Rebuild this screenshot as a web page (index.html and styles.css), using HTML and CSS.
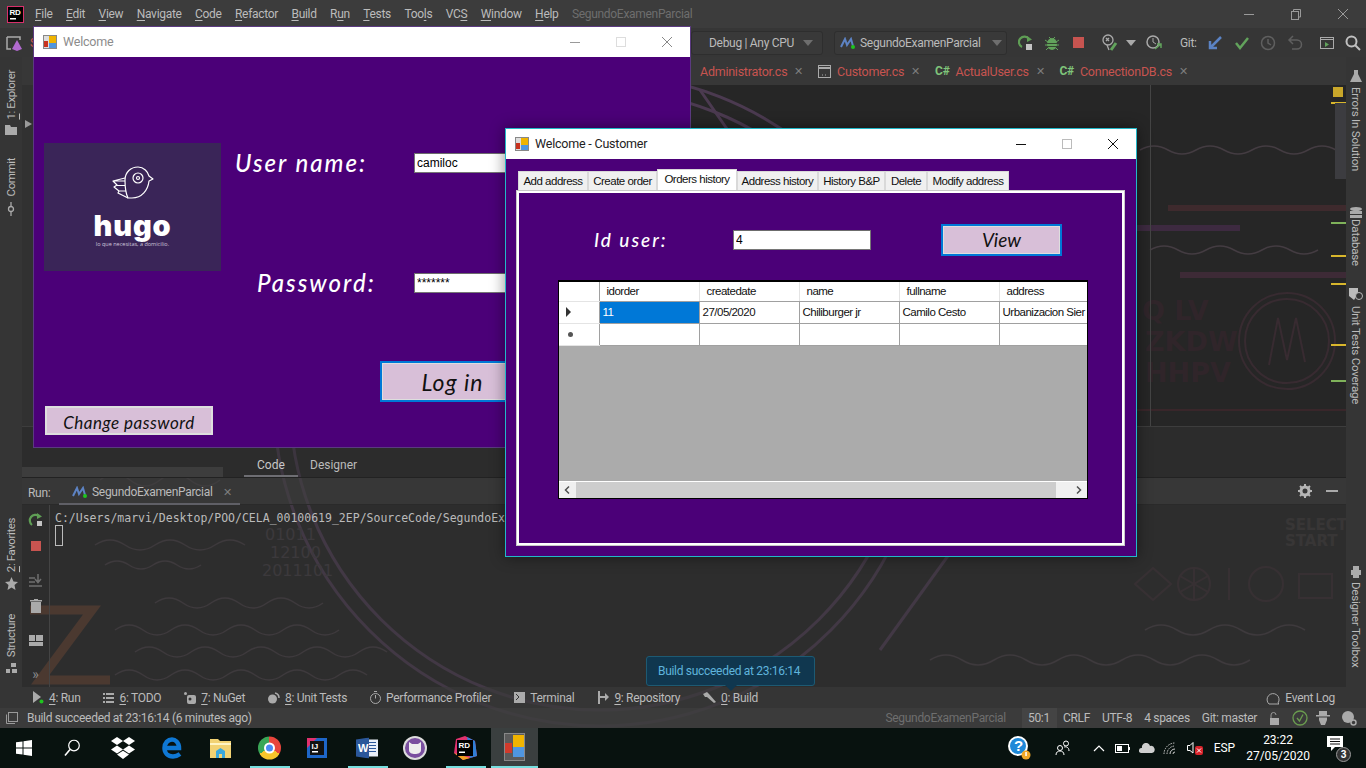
FILE: index.html
```html
<!DOCTYPE html>
<html lang="en">
<head>
  <meta charset="UTF-8">
  <title>SegundoExamenParcial</title>
  <link rel="stylesheet" href="styles.css">
</head>
<body>
  <div class="desktop">
    <!-- wallpaper behind the semi transparent IDE -->
    <svg class="wallpaper" width="1366" height="728" viewBox="0 0 1366 728" fill="none">
      <g stroke="#4b3a50" stroke-width="3">
        <circle cx="600" cy="400" r="310"/>
        <circle cx="600" cy="400" r="326"/>
        <path d="M700 90 L880 350 M880 650 L1010 470"/>
      </g>
      <path d="M30 610 H92 L40 680 H110" stroke="#5c3b2b" stroke-width="9"/>
      <g stroke="#443c42" stroke-width="1.5">
        <path d="M100 480 q15 -12 30 0 t30 0 t30 0 t30 0"/>
        <path d="M95 545 q15 -10 30 0 t30 0 t30 0 t30 0 t30 0"/>
        <path d="M105 565 q12 -8 24 0 t24 0 t24 0 t24 0"/>
        <path d="M155 603 q14 -10 28 0 t28 0 t28 0 t28 0 t28 0 t28 0"/>
        <path d="M115 630 q14 -10 28 0 t28 0 t28 0 t28 0 t28 0 t28 0 t28 0 t28 0"/>
        <path d="M135 652 q14 -10 28 0 t28 0 t28 0 t28 0 t28 0 t28 0 t28 0 t28 0 t28 0"/>
        <path d="M115 675 q14 -10 28 0 t28 0 t28 0 t28 0 t28 0 t28 0 t28 0 t28 0 t28 0"/>
        <path d="M930 660 q16 -10 32 0 t32 0 t32 0 t32 0 t32 0 t32 0 t32 0 t32 0 t32 0 t32 0"/>
        <path d="M1145 630 q16 -10 32 0 t32 0 t32 0 t32 0 t32 0"/>
        <path d="M1140 150 q14 -8 28 0 t28 0 t28 0 t28 0 t28 0 t28 0 t28 0"/>
        <path d="M1150 250 q14 -8 28 0 t28 0 t28 0 t28 0 t28 0 t28 0"/>
      </g>
      <g stroke-width="6">
        <path d="M1168 208 H1346" stroke="#3e2a2d"/>
        <path d="M1137 228 H1240" stroke="#3d2a40"/>
        <path d="M1180 275 H1346" stroke="#3d2a36"/>
      </g>
      <path d="M1137 410 H1346" stroke="#39262a" stroke-width="2"/>
      <g stroke="#382b31" stroke-width="2">
        <circle cx="1287" cy="341" r="48"/>
        <circle cx="1287" cy="341" r="42"/>
        <path d="M1269 365 L1278 318 L1287 360 L1296 318 L1305 362"/>
        <path d="M1153 568 L1171 584 L1153 600 L1135 584 Z"/>
        <circle cx="1194" cy="584" r="16"/>
        <path d="M1194 568 V600 M1180 576 L1208 592 M1180 592 L1208 576"/>
        <path d="M1229 568 V600"/>
        <circle cx="1266" cy="584" r="17"/>
        <rect x="1299" y="574" width="33" height="24"/>
      </g>
      <g class="wall-text">
        <text x="1142" y="320">Q LV</text>
        <text x="1145" y="351">ZKDW</text>
        <text x="1145" y="382">HHPV</text>
      </g>
      <g class="wall-small">
        <text x="1285" y="530">SELECT</text>
        <text x="1285" y="546">START</text>
      </g>
      <g class="wall-binary">
        <text x="265" y="540">01011</text>
        <text x="270" y="558">12100</text>
        <text x="262" y="576">2011101</text>
      </g>
    </svg>

    <div class="ide">
      <header class="menubar">
        <svg class="rd-logo" width="17" height="17" viewBox="0 0 17 17"><rect x=".5" y=".5" width="16" height="16" fill="#000" stroke="#d9306b"/><text x="2.5" y="9" class="logo-text">RD</text><rect x="3" y="12" width="6" height="1.5" fill="#fff"/></svg>
        <nav class="menu">
          <span><u>F</u>ile</span><span><u>E</u>dit</span><span><u>V</u>iew</span><span><u>N</u>avigate</span><span><u>C</u>ode</span><span><u>R</u>efactor</span><span><u>B</u>uild</span><span>R<u>u</u>n</span><span><u>T</u>ests</span><span>Too<u>l</u>s</span><span>VC<u>S</u></span><span><u>W</u>indow</span><span><u>H</u>elp</span>
          <span class="menu-project">SegundoExamenParcial</span>
        </nav>
        <div class="win-ctrl">
          <svg width="12" height="12" viewBox="0 0 12 12"><path d="M1 6.500H11" stroke="#9a9a9a"/></svg>
          <svg width="12" height="12" viewBox="0 0 12 12" fill="none" stroke="#9a9a9a"><rect x="1.500" y="3.500" width="7" height="8"/><path d="M3.500 3.500V1.500H10.500V9H8.500"/></svg>
          <svg width="12" height="12" viewBox="0 0 12 12"><path d="M1 1L11 11M11 1L1 11" stroke="#9a9a9a"/></svg>
        </div>
      </header>

      <div class="toolbar">
        <svg class="tb-first" width="18" height="18" viewBox="0 0 18 18"><path d="M1 3H14V6M1 3V15H5" fill="none" stroke="#aaa" stroke-width="1.500"/><path d="M11 6L16 15L11 17L6 15Z" fill="#b26ad0"/></svg>
        <span class="tb-s">S</span>
        <div class="tb-box tb-debug">
          <span>Debug | Any CPU</span><i class="caret"></i>
        </div>
        <div class="tb-box tb-config">
          <svg width="15" height="12" viewBox="0 0 15 12"><path d="M1 10L5 2L7 8L11 2L13 9" fill="none" stroke="#5d83c4" stroke-width="2"/><circle cx="13" cy="10" r="2" fill="#1fc41f"/></svg>
          <span>SegundoExamenParcial</span><i class="caret"></i>
        </div>
        <span class="tool"><svg width="16" height="16" viewBox="0 0 16 16" fill="none"><path d="M11 4A5.500 5.500 0 1 0 4 12" stroke="#5f9e55" stroke-width="2.200"/><path d="M9 1L14 4.500L9 7Z" fill="#5f9e55"/><rect x="8" y="9" width="6" height="6" fill="#c4c4c4"/></svg></span>
        <span class="tool"><svg width="16" height="16" viewBox="0 0 16 16"><ellipse cx="8" cy="9" rx="5" ry="6" fill="#62a35c"/><path d="M1 5L4 7M15 5L12 7M1 10H4M15 10H12M2 15L4 13M14 15L12 13M5 2L7 4M11 2L9 4" stroke="#62a35c"/><path d="M3 8.500H13M3 11.500H13" stroke="#35472f"/></svg></span>
        <span class="tool"><i class="stop"></i></span>
        <span class="tool tool-g1"><svg width="18" height="18" viewBox="0 0 18 18" fill="none" stroke="#aaa" stroke-width="1.300"><circle cx="7" cy="6" r="5"/><path d="M5 4L8 7M8 4L5 7M6 11L8 16"/><path d="M10 16L15 9" stroke="#62a35c" stroke-width="3"/></svg></span>
        <span class="tool-caret"><i class="caret caret-light"></i></span>
        <span class="tool tool-g2"><svg width="18" height="18" viewBox="0 0 18 18" fill="none"><circle cx="8" cy="8" r="6" stroke="#aaa" stroke-width="1.500"/><path d="M8 4V8L11 10" stroke="#aaa"/><path d="M10 15L16 10M12 10H16V14" stroke="#62a35c" stroke-width="1.500"/></svg></span>
        <span class="tb-git">Git:</span>
        <span class="tool tool-g3"><svg width="16" height="16" viewBox="0 0 16 16" fill="none"><path d="M14 2L4 12M3 6V13H10" stroke="#5b83c4" stroke-width="2.500"/></svg></span>
        <span class="tool tool-g4"><svg width="16" height="16" viewBox="0 0 16 16" fill="none"><path d="M2 8L6 13L14 3" stroke="#62a35c" stroke-width="2.500"/></svg></span>
        <span class="tool"><svg width="16" height="16" viewBox="0 0 16 16" fill="none" stroke="#5f5f5f" stroke-width="1.500"><circle cx="8" cy="8" r="6.500"/><path d="M8 4V8L11 10"/></svg></span>
        <span class="tool tool-g4"><svg width="16" height="16" viewBox="0 0 16 16" fill="none" stroke="#5f5f5f" stroke-width="1.500"><path d="M6 1L2 5L6 9M2 5H10A4 4 0 0 1 10 14H5"/></svg></span>
        <span class="tool tool-g5"><svg width="16" height="16" viewBox="0 0 16 16" fill="none"><rect x="1.500" y="2.500" width="13" height="11" stroke="#aaa"/><path d="M1.500 4.500H14.500" stroke="#aaa"/><path d="M6 7L10 9.500L6 12Z" fill="#62a35c"/></svg></span>
        <span class="tool"><svg width="16" height="16" viewBox="0 0 16 16" fill="none" stroke="#c0c0c0" stroke-width="2"><circle cx="6.500" cy="6.500" r="5"/><path d="M10 10L15 15"/></svg></span>
      </div>

      <div class="workspace">
        <aside class="side-left">
          <span class="vlabel vl-explorer"><u>1</u>: Explorer</span>
          <svg class="vl-folder" width="12" height="10" viewBox="0 0 12 10" fill="#aaa"><path d="M0 0H5L6 2H12V10H0Z"/></svg>
          <span class="vlabel vl-commit">Commit</span>
          <svg class="vl-commit-icon" width="14" height="10" viewBox="0 0 14 10" fill="none" stroke="#aaa" stroke-width="1.300"><circle cx="7" cy="5" r="2.500"/><path d="M0 5H4M10 5H14"/></svg>
          <span class="vlabel vl-fav"><u>2</u>: Favorites</span>
          <svg class="vl-star" width="13" height="13" viewBox="0 0 13 13"><path d="M6.500 0L8.500 4.500L13 5L9.500 8L10.500 13L6.500 10.500L2.500 13L3.500 8L0 5L4.500 4.500Z" fill="#aaa"/></svg>
          <span class="vlabel vl-struct">Structure</span>
          <svg class="vl-struct-icon" width="11" height="11" viewBox="0 0 11 11" fill="#aaa"><rect x="5" width="5" height="4"/><rect y="6" width="4" height="4"/><rect x="6" y="6" width="5" height="4"/></svg>
        </aside>

        <main class="center">
          <div class="file-tabs">
            <span class="file-tab ft-admin"><span class="red">Administrator.cs</span><em>&#x2715;</em></span>
            <span class="file-tab ft-cust"><svg width="13" height="13" viewBox="0 0 13 13" fill="none" stroke="#aaa"><rect x=".5" y=".5" width="12" height="12"/><path d="M.5 3H12.500" stroke-width="2"/><path d="M4 10H5M7 10H8"/></svg><span class="red">Customer.cs</span><em>&#x2715;</em></span>
            <span class="file-tab ft-actual"><b class="csharp">C#</b><span class="red">ActualUser.cs</span><em>&#x2715;</em></span>
            <span class="file-tab ft-conn"><b class="csharp">C#</b><span class="red">ConnectionDB.cs</span><em>&#x2715;</em></span>
          </div>
          <div class="editor">
            <i class="tree-strip"></i>
            <i class="tree-arrow"></i>
            <div class="editor-margin"></div>
            <div class="stripe">
              <i class="stripe-top"></i>
              <i class="mark mark-y m1"></i>
              <i class="stripe-thumb"></i>
              <i class="mark mark-g m2"></i>
              <i class="mark mark-y m3"></i>
              <i class="mark mark-y m4"></i>
              <i class="mark mark-y m5"></i>
              <i class="mark mark-g m6"></i>
            </div>
          </div>
          <div class="design-tabs">
            <span class="design-tab active">Code</span>
            <span class="design-tab">Designer</span>
          </div>
          <div class="run-head">
            <span class="run-label">Run:</span>
            <span class="run-tab">
              <svg width="15" height="12" viewBox="0 0 15 12"><path d="M1 10L5 2L7 8L11 2L13 9" fill="none" stroke="#5d83c4" stroke-width="2"/><circle cx="13" cy="10" r="2" fill="#1fc41f"/></svg>
              SegundoExamenParcial<em>&#x2715;</em>
            </span>
            <span class="run-actions">
              <svg width="14" height="14" viewBox="0 0 14 14"><circle cx="7" cy="7" r="4" fill="none" stroke="#b5b5b5" stroke-width="3"/><path d="M7 0V3M7 11V14M0 7H3M11 7H14M2 2L4 4M10 10L12 12M12 2L10 4M4 10L2 12" stroke="#b5b5b5" stroke-width="2"/></svg>
              <i class="min-dash"></i>
            </span>
          </div>
          <div class="run-body">
            <div class="run-tools">
              <svg width="16" height="16" viewBox="0 0 16 16" fill="none"><path d="M11 4A5.500 5.500 0 1 0 4 13" stroke="#5f9e55" stroke-width="2.200"/><path d="M9 1L14 4.500L9 7Z" fill="#5f9e55"/><rect x="9" y="9" width="5" height="5" fill="#c4c4c4"/></svg>
              <i class="stop stop-run"></i>
              <svg class="rt-scroll" width="14" height="14" viewBox="0 0 14 14" stroke="#6f6f6f" stroke-width="1.500" fill="none"><path d="M0 5H6M0 9H6M0 13H13M9 1V9M6 6L9 9.500L12 6"/></svg>
              <svg class="rt-trash" width="12" height="14" viewBox="0 0 12 14" fill="#aaa"><rect x="1" y="3" width="10" height="11"/><rect y="1" width="12" height="1.500"/><rect x="4" width="4" height="1.500"/></svg>
              <svg class="rt-layout" width="14" height="11" viewBox="0 0 14 11" fill="#aaa"><rect width="6" height="6"/><rect x="7" width="7" height="6"/><rect y="7" width="14" height="4"/></svg>
              <span class="rt-more">&raquo;</span>
            </div>
            <div class="console">C:/Users/marvi/Desktop/POO/CELA_00100619_2EP/SourceCode/SegundoEx<br><span class="cursor"></span></div>
            <div class="balloon">Build succeeded at 23:16:14</div>
          </div>
        </main>

        <aside class="side-right">
          <svg class="sr-flask" width="12" height="12" viewBox="0 0 12 12"><path d="M4 0H8V4L12 12H0L4 4Z" fill="#aaa"/></svg>
          <span class="vlabel-r sr-errors">Errors In Solution</span>
          <svg class="sr-db" width="12" height="12" viewBox="0 0 12 12" fill="#aaa"><ellipse cx="6" cy="2" rx="6" ry="2"/><rect y="4" width="12" height="3"/><rect y="8" width="12" height="3"/></svg>
          <span class="vlabel-r sr-database">Database</span>
          <svg class="sr-shield" width="14" height="12" viewBox="0 0 14 12"><path d="M0 0H9V6L5 12L0 8Z" fill="#bbb"/><circle cx="10" cy="8" r="3.500" fill="#333" stroke="#bbb"/></svg>
          <span class="vlabel-r sr-unit">Unit Tests Coverage</span>
          <svg class="sr-toolbox" width="10" height="12" viewBox="0 0 10 12" fill="#aaa"><rect x="2" width="6" height="4"/><rect y="4" width="10" height="5"/><rect x="2" y="9" width="6" height="3"/></svg>
          <span class="vlabel-r sr-toolbox-label">Designer Toolbox</span>
        </aside>
      </div>

      <div class="toolstrip">
        <span class="strip-item strip-run"><svg width="11" height="13" viewBox="0 0 11 13"><path d="M0 0L8 6L0 12Z" fill="#aaa"/><circle cx="8.500" cy="10.500" r="2" fill="#1fc41f"/></svg><span><u>4</u>: Run</span></span>
        <span class="strip-item"><svg width="11" height="11" viewBox="0 0 11 11" fill="#aaa"><path d="M0 1H2V3H0ZM3 1H11V3H3ZM0 5H2V7H0ZM3 5H11V7H3ZM0 9H2V11H0ZM3 9H11V11H3Z"/></svg><span><u>6</u>: TODO</span></span>
        <span class="strip-item"><svg width="12" height="12" viewBox="0 0 12 12" fill="#aaa"><rect x="3" y="3" width="9" height="9" rx="2"/><circle cx="1.500" cy="1.500" r="1.500"/><circle cx="6" cy="7" r="1.500" fill="#333"/></svg><span><u>7</u>: NuGet</span></span>
        <span class="strip-item"><svg width="12" height="12" viewBox="0 0 12 12"><circle cx="4.500" cy="7" r="4.500" fill="#aaa"/><path d="M7 1A5 5 0 0 1 11 6" stroke="#aaa" fill="none" stroke-width="1.500"/></svg><span><u>8</u>: Unit Tests</span></span>
        <span class="strip-item"><svg width="11" height="13" viewBox="0 0 11 13" fill="none" stroke="#aaa"><circle cx="5.500" cy="7.500" r="5"/><path d="M4 .5H7M5.500 7.500V4"/></svg><span>Performance Profiler</span></span>
        <span class="strip-item"><svg width="11" height="11" viewBox="0 0 11 11"><rect width="11" height="11" fill="#aaa"/><path d="M2 2L5 5L2 8" stroke="#333" fill="none"/></svg><span>Terminal</span></span>
        <span class="strip-item"><svg width="12" height="13" viewBox="0 0 12 13" fill="#aaa"><rect x="1" width="2" height="13"/><path d="M3 5H8V2L12 6L8 10V7H3Z"/></svg><span><u>9</u>: Repository</span></span>
        <span class="strip-item"><svg width="13" height="11" viewBox="0 0 13 11"><path d="M0 2L4 0L6 2L13 10L11 11L4 5L2 5Z" fill="#aaa"/></svg><span><u>0</u>: Build</span></span>
        <span class="strip-item strip-log"><svg width="14" height="14" viewBox="0 0 14 14" fill="none" stroke="#aaa"><path d="M3 13A6 6 0 1 1 12 12L13 13Z"/></svg><span>Event Log</span></span>
      </div>

      <footer class="statusbar">
        <svg width="12" height="12" viewBox="0 0 12 12" fill="none" stroke="#9a9a9a"><rect x="2.500" y=".5" width="9" height="9"/><path d="M.5 2.500V11.500H9"/></svg>
        <span class="status-msg">Build succeeded at 23:16:14 (6 minutes ago)</span>
        <span class="status-right">
          <span class="dim">SegundoExamenParcial</span>
          <span class="pos">50:1</span>
          <span>CRLF</span><span>UTF-8</span><span>4 spaces</span><span>Git: master</span>
          <svg width="11" height="13" viewBox="0 0 11 13"><path d="M2 6V3A2.500 2.500 0 0 1 7 3" fill="none" stroke="#999"/><rect x="1" y="6" width="9" height="7" fill="#aaa"/></svg>
          <svg width="16" height="16" viewBox="0 0 16 16" fill="none" stroke="#6a9c4f" stroke-width="1.300"><circle cx="8" cy="8" r="7"/><path d="M5 8L7.500 11L11 4.500"/></svg>
          <svg class="st-hat" width="14" height="14" viewBox="0 0 14 14" fill="#aaa"><rect x="3" width="8" height="4"/><rect y="4" width="14" height="1.500"/><path d="M3 6.500H11V9L9 14H5L3 9Z"/></svg>
          <svg width="15" height="15" viewBox="0 0 15 15" fill="#aaa"><circle cx="6" cy="6" r="6"/><circle cx="11.500" cy="11.500" r="2.500" fill="none" stroke="#aaa" stroke-width="1.500"/></svg>
        </span>
      </footer>
    </div>

    <footer class="taskbar">
      <svg class="tk-win" width="16" height="16" viewBox="0 0 16 16" fill="#fff"><path d="M0 2.300L6.500 1.400V7.500H0ZM7.500 1.200L16 0V7.500H7.500ZM0 8.500H6.500V14.600L0 13.700ZM7.500 8.500H16V16L7.500 14.800Z"/></svg>
      <svg class="tk-search" width="16" height="17" viewBox="0 0 16 17" fill="none" stroke="#fff" stroke-width="1.200"><circle cx="10" cy="6" r="5.300"/><path d="M6 10L1 16" stroke-width="1.600"/></svg>
      <svg class="tk-drop" width="24" height="22" viewBox="0 0 24 22" fill="#fff"><path d="M6 0L12 4L6 8L0 4ZM18 0L24 4L18 8L12 4ZM6 8.500L12 12.500L6 16.500L0 12.500ZM18 8.500L24 12.500L18 16.500L12 12.500ZM6 17.500L12 13.800L18 17.500L12 22Z"/></svg>
      <svg class="tk-edge" width="20" height="22" viewBox="0 0 20 22" fill="none" stroke="#0f78d4" stroke-width="4.500"><path d="M3 11H17C17 5 13 2.500 10 2.500C6 2.500 2.500 6 2.500 11C2.500 16 6 19.500 11 19.500C14 19.500 16 18.500 18 17"/></svg>
      <svg class="tk-files" width="21" height="20" viewBox="0 0 21 20"><path d="M0 1H8L10 3H21V20H0Z" fill="#f2d273"/><path d="M0 5H21V7H0Z" fill="#fff4c4"/><path d="M6 20V13L10.500 10L15 13V20H12V16H9V20Z" fill="#3ba8dc"/></svg>
      <span class="tk-chrome"><i></i></span>
      <svg class="tk-ij" width="20" height="20" viewBox="0 0 20 20"><rect width="20" height="20" fill="#1e66c8"/><path d="M0 0H10L0 10Z" fill="#e0316e"/><rect x="3" y="3" width="14" height="14" fill="#111"/><text x="4.500" y="10.500" class="ij-text">IJ</text><rect x="5" y="13" width="6" height="1.500" fill="#fff"/></svg>
      <svg class="tk-word" width="22" height="21" viewBox="0 0 22 21"><rect x="8" y="2" width="14" height="17" fill="#e8eef8"/><path d="M11 5H20M11 8H20M11 11H20M11 14H20" stroke="#2b579a"/><path d="M0 2L13 0V21L0 19Z" fill="#2b579a"/><text x="2" y="14.500" class="word-text">W</text></svg>
      <svg class="tk-kraken" width="24" height="24" viewBox="0 0 24 24"><circle cx="12" cy="12" r="12" fill="#ddd"/><circle cx="12" cy="12" r="10" fill="#7a4fa0"/><path d="M6 6L9 8H15L18 6V14C18 17 15 18 12 18C9 18 6 17 6 14Z" fill="#eee"/></svg>
      <svg class="tk-rd" width="24" height="24" viewBox="0 0 24 24"><path d="M3 3L12 0L22 5L24 20L10 24L1 17Z" fill="#e0316e"/><path d="M14 1L22 5L24 20L17 22Z" fill="#2f7fd6"/><path d="M1 17L10 24L17 22Z" fill="#f0a020"/><rect x="4" y="4" width="16" height="16" fill="#000"/><text x="5.500" y="12" class="rd-text">RD</text><rect x="6" y="15.500" width="6" height="1.500" fill="#fff"/></svg>
      <span class="tk-active"><svg width="21" height="28" viewBox="0 0 21 28"><rect x=".5" y=".5" width="20" height="27" fill="#5b5b5b" stroke="#888"/><rect x="9" y="2" width="11" height="12" fill="#f0b400"/><rect x="1" y="10" width="7" height="10" fill="#d13a2b"/><rect x="9" y="14" width="11" height="10" fill="#4f96e0"/></svg></span>

      <span class="tray">
        <svg width="24" height="26" viewBox="0 0 24 26"><circle cx="11" cy="11" r="10" fill="#fff"/><circle cx="11" cy="11" r="8" fill="#1e88d8"/><text x="7" y="16" class="help-text">?</text><circle cx="19" cy="20" r="4.500" fill="#f0a828"/><rect x="18.300" y="17" width="1.500" height="4" fill="#fff"/></svg>
        <svg class="tr-people" width="16" height="16" viewBox="0 0 16 16" fill="none" stroke="#fff"><circle cx="5" cy="8" r="2.500"/><path d="M1 15C1 12 3 11 5 11C7 11 9 12 9 15"/><circle cx="11" cy="3.500" r="2.500"/><path d="M9 7C11 6.500 14 7 14 11"/></svg>
        <svg class="tr-up" width="12" height="7" viewBox="0 0 12 7" fill="none" stroke="#fff" stroke-width="1.200"><path d="M1 6L6 1L11 6"/></svg>
        <svg class="tr-batt" width="15" height="9" viewBox="0 0 15 9"><rect x=".5" y=".5" width="13" height="8" fill="none" stroke="#fff"/><rect x="2" y="2" width="5" height="5" fill="#fff"/><rect x="14" y="3" width="1" height="3" fill="#fff"/></svg>
        <svg class="tr-cloud" width="16" height="10" viewBox="0 0 16 10"><path d="M2 10A2.500 2.500 0 0 1 3 5A4 4 0 0 1 11 3A3.500 3.500 0 0 1 13 10Z" fill="#cfcfcf"/></svg>
        <svg class="tr-wifi" width="13" height="13" viewBox="0 0 13 13" fill="none" stroke="#cfcfcf"><path d="M1 12A11 11 0 0 1 12 1M4 12A8 8 0 0 1 12 4" stroke-dasharray="1.500 1"/><path d="M7 12A5 5 0 0 1 12 7M10 12A2 2 0 0 1 12 10" /></svg>
        <svg class="tr-vol" width="16" height="14" viewBox="0 0 16 14"><path d="M.5 4.500H3L6 1.500V12L3 9.500H.5Z" fill="none" stroke="#fff"/><rect x="8" y="5" width="8" height="9" rx="2" fill="#d8232a"/><path d="M10 7.500L14 11.500M14 7.500L10 11.500" stroke="#fff"/></svg>
        <span class="tr-lang">ESP</span>
        <span class="tr-clock"><span>23:22</span><span>27/05/2020</span></span>
        <span class="tr-notif">
          <svg width="16" height="15" viewBox="0 0 16 15"><path d="M0 0H16V11H8L4 15V11H0Z" fill="#fff"/><path d="M3 3H13M3 5.500H13M3 8H13" stroke="#111"/></svg>
          <b>3</b>
        </span>
      </span>
    </footer>

    <!-- login form window, sits under the customer window -->
    <section class="window win-login">
      <div class="titlebar title-dim">
        <svg class="app-icon" width="14" height="14" viewBox="0 0 14 14"><rect x=".5" y=".5" width="13" height="13" fill="#ddd" stroke="#888"/><rect x="6" y="1" width="7" height="7" fill="#f0b400"/><rect x="1" y="6" width="4" height="6" fill="#c8321e"/><rect x="6" y="8" width="7" height="5" fill="#4f96e0"/></svg>
        <span class="title-text">Welcome</span>
        <span class="title-btns">
          <svg width="12" height="12" viewBox="0 0 12 12"><path d="M1 6.500H11" stroke="#999"/></svg>
          <svg width="12" height="12" viewBox="0 0 12 12"><rect x="1.500" y="1.500" width="9" height="9" fill="none" stroke="#ddd"/></svg>
          <svg width="12" height="12" viewBox="0 0 12 12"><path d="M1 1L11 11M11 1L1 11" stroke="#888"/></svg>
        </span>
      </div>
      <div class="login-body">
        <div class="login-left">
          <div class="logo-box">
            <svg width="42" height="34" viewBox="0 0 42 34" fill="none" stroke="#fff" stroke-width="1.200" stroke-linejoin="round">
              <path d="M13 14C13 6 19 1 26 1C32 1 36 6 37 10L41 13L37 15C36 24 30 32 20 32H16C14 28 13 20 13 14Z"/>
              <circle cx="26" cy="12" r="5"/><circle cx="26" cy="12" r="1.500"/>
              <path d="M13 12L1 15L5 19L2 21L7 25L6 27L16 32M1 15H13M5 19.500H13M7 25H14"/>
            </svg>
            <span class="hugo">hugo</span>
            <span class="hugo-tag">lo que necesitas, a domicilio.</span>
          </div>
          <button class="btn-plain" type="button">Change password</button>
        </div>
        <form class="login-form">
          <div class="login-row">
            <label class="hand-label">User name:</label>
            <input class="win-input" type="text" value="camiloc">
          </div>
          <div class="login-row row-pass">
            <label class="hand-label label-pass">Password:</label>
            <input class="win-input input-pass" type="text" value="*******">
          </div>
          <button class="btn-login" type="button">Log in</button>
        </form>
      </div>
    </section>

    <!-- customer window, orders history tab -->
    <section class="window win-customer">
      <div class="titlebar">
        <svg class="app-icon" width="14" height="14" viewBox="0 0 14 14"><rect x=".5" y=".5" width="13" height="13" fill="#ddd" stroke="#888"/><rect x="6" y="1" width="7" height="7" fill="#f0b400"/><rect x="1" y="6" width="4" height="6" fill="#c8321e"/><rect x="6" y="8" width="7" height="5" fill="#4f96e0"/></svg>
        <span class="title-text">Welcome - Customer</span>
        <span class="title-btns">
          <svg width="12" height="12" viewBox="0 0 12 12"><path d="M1 6.500H11" stroke="#111"/></svg>
          <svg width="12" height="12" viewBox="0 0 12 12"><rect x="1.500" y="1.500" width="9" height="9" fill="none" stroke="#bbb"/></svg>
          <svg width="12" height="12" viewBox="0 0 12 12"><path d="M1 1L11 11M11 1L1 11" stroke="#111"/></svg>
        </span>
      </div>
      <div class="customer-body">
        <div class="tabs">
          <span class="tab tab-add">Add address</span>
          <span class="tab tab-create">Create order</span>
          <span class="tab tab-orders active">Orders history</span>
          <span class="tab tab-addr">Address history</span>
          <span class="tab tab-hist">History B&amp;P</span>
          <span class="tab tab-del">Delete</span>
          <span class="tab tab-mod">Modify address</span>
        </div>
        <div class="tab-page">
          <div class="search-row">
            <label class="hand-label label-id">Id user:</label>
            <input class="win-input input-id" type="text" value="4">
            <button class="btn-view" type="button">View</button>
          </div>
          <div class="datagrid">
            <table>
              <thead>
                <tr><th class="row-head"></th><th>idorder</th><th>createdate</th><th>name</th><th>fullname</th><th>address</th></tr>
              </thead>
              <tbody>
                <tr><td class="row-head"><i class="row-arrow"></i></td><td class="selected">11</td><td>27/05/2020</td><td>Chiliburger jr</td><td>Camilo Cesto</td><td>Urbanizacion Sier</td></tr>
                <tr><td class="row-head"><i class="row-star"></i></td><td></td><td></td><td></td><td></td><td></td></tr>
              </tbody>
            </table>
            <div class="grid-empty"></div>
            <div class="hscroll">
              <svg width="17" height="16" viewBox="0 0 17 16" fill="none" stroke="#505050" stroke-width="1.500"><path d="M10 4.500L6.500 8L10 11.500"/></svg>
              <i class="hscroll-thumb"></i>
              <svg class="hscroll-right" width="17" height="16" viewBox="0 0 17 16" fill="none" stroke="#505050" stroke-width="1.500"><path d="M7 4.500L10.500 8L7 11.500"/></svg>
            </div>
          </div>
        </div>
      </div>
    </section>
  </div>
</body>
</html>
```

FILE: styles.css
```css
* { box-sizing: border-box; }
html, body { margin: 0; padding: 0; }
body { font-family: Roboto, "Noto Sans", sans-serif; }

.desktop {
  position: relative;
  width: 1366px;
  height: 768px;
  overflow: hidden;
  background: #262626;
}
.wallpaper { position: absolute; top: 0; left: 0; }
.wall-text text { font: bold 27px "DejaVu Sans", sans-serif; fill: #30252a; }
.wall-small text { font: bold 15px "DejaVu Sans", sans-serif; fill: #3a3636; }
.wall-binary text { font: 16px "DejaVu Sans", sans-serif; fill: #403b40; }

/*---------------------------------- IDE ----------------------------------*/
.ide {
  position: relative;
  height: 728px;
  display: flex;
  flex-direction: column;
  color: #bbbbbb;
  font-size: 12px;
  letter-spacing: -0.3px;
}
.logo-text { font: bold 8px "Liberation Sans", sans-serif; fill: #fff; }
u { text-underline-offset: 2px; }

.menubar {
  height: 28px;
  background: #3c3c3c;
  display: flex;
  align-items: center;
  padding-left: 7px;
}
.rd-logo { margin-right: 11px; }
.menu { display: flex; gap: 13.400px; }
.menu-project { color: #6e6e6e; }
.win-ctrl { margin-left: auto; display: flex; gap: 35px; padding-right: 17px; }

.toolbar {
  height: 29px;
  background: rgba(58, 58, 58, 0.85);
  display: flex;
  align-items: center;
  padding-left: 6px;
}
.tb-s { color: #c75450; margin-left: 6px; }
.tb-box {
  height: 24px;
  border: 1px solid #2e2e2e;
  border-radius: 3px;
  display: flex;
  align-items: center;
  gap: 5px;
  background: rgba(60, 60, 60, 0.6);
  white-space: nowrap;
}
.tb-box svg { flex: none; }
.tb-debug { width: 132px; margin-left: auto; padding-left: 17px; gap: 3px; }
.tb-config { width: 173px; margin: 0 6px 0 11px; padding-left: 5px; }
.caret {
  width: 0;
  height: 0;
  border: 5px solid transparent;
  border-top: 6px solid #6e6e6e;
  border-bottom: 0;
  margin-left: 6px;
  display: block;
}
.caret-light { border-top-color: #aaa; margin: 0; }
.tool { width: 26px; display: flex; justify-content: center; }
.tool-caret { width: 16px; display: flex; justify-content: center; }
.tool-g1 { margin-left: 6px; }
.tool-g2 { margin-left: 2px; }
.tb-git { margin-left: 13px; width: 18px; }
.tool-g3 { margin-left: 4px; }
.tool-g4 { margin-left: 1px; }
.tool-g5 { margin-left: 6px; }
.stop { display: block; width: 11px; height: 11px; background: #c75450; }

.workspace { flex: 1; display: flex; min-height: 0; }

.side-left {
  width: 22px;
  background: #353535;
  position: relative;
  display: flex;
  flex-direction: column;
  align-items: center;
}
.vlabel, .vlabel-r { writing-mode: vertical-rl; font-size: 11.500px; white-space: nowrap; }
.vlabel { transform: rotate(180deg); letter-spacing: -0.4px; }
.vlabel-r { letter-spacing: -0.2px; }
.vl-explorer { margin-top: 13px; }
.vl-folder { margin-top: 5px; }
.vl-commit { margin-top: 23px; }
.vl-commit-icon { margin-top: 8px; transform: rotate(90deg); }
.vl-fav { margin-top: 304px; }
.vl-star { margin-top: 5px; }
.vl-struct { margin-top: 24px; }
.vl-struct-icon { margin-top: 6px; }

.center { flex: 1; min-width: 0; display: flex; flex-direction: column; }
.file-tabs {
  height: 28px;
  background: rgba(62, 62, 62, 0.7);
  display: flex;
  align-items: center;
  padding-left: 678px;
  font-size: 12.500px;
  letter-spacing: -0.250px;
}
.file-tab { display: flex; align-items: center; gap: 6px; }
.file-tab em { font-style: normal; color: #7d7d7d; font-size: 11px; margin-left: 1px; }
.ft-cust, .ft-actual, .ft-conn { margin-left: 15px; }
.red { color: #c75450; }
.csharp { color: #7fc47a; font-weight: bold; font-size: 12px; }

.editor { position: relative; border-bottom: 1px solid #3d3d3d; height: 342px; flex: none; }
.tree-strip { position: absolute; left: 0; top: 0; bottom: 0; width: 12px; background: rgba(60, 60, 60, 0.5); }
.tree-arrow {
  position: absolute;
  left: 3px;
  top: 35px;
  border: 4px solid transparent;
  border-left: 7px solid #9a9a9a;
  border-right: 0;
}
.editor-margin { position: absolute; top: 0; bottom: 0; left: 1128px; width: 1px; background: #444; }
.stripe { position: absolute; top: 0; bottom: 0; left: 1309px; width: 15px; }
.stripe i { position: absolute; display: block; }
.stripe-top { top: 2px; left: 2px; width: 10px; height: 10px; background: #c9a72a; }
.stripe-thumb { top: 18px; left: 4px; width: 11px; height: 76px; background: #3c3c40; }
.mark { left: 0; width: 15px; height: 2px; }
.mark-y { background: #d8b62c; }
.mark-g { background: #7fb25a; }
.m1 { top: 17px; }
.m2 { top: 137px; }
.m3 { top: 170px; }
.m4 { top: 198px; }
.m5 { top: 259px; }
.m6 { top: 295px; }

.design-tabs {
  position: relative;
  height: 51px;
  background: rgba(50, 50, 50, 0.55);
  display: flex;
  align-items: flex-end;
  padding-left: 222px;
  border-bottom: 1px solid #222;
}
.design-tabs::before {
  content: '';
  position: absolute;
  left: 0;
  bottom: 0;
  width: 201px;
  height: 10px;
  background: #3d3d3d;
}
.design-tab { height: 31px; padding: 12px 12px 0; border-bottom: 2px solid transparent; letter-spacing: 0; }
.design-tab.active { width: 54px; padding-left: 13px; border-bottom-color: #6e6e73; color: #c8c8c8; }

.run-head {
  height: 27px;
  background: rgba(62, 62, 62, 0.75);
  display: flex;
  align-items: center;
  padding-left: 6px;
  border-bottom: 1px solid #2a2a2a;
}
.run-label { width: 31px; padding-top: 3px; }
.run-tab {
  width: 181px;
  height: 27px;
  border-bottom: 2px solid #5f5f66;
  display: flex;
  align-items: center;
  gap: 5px;
  padding: 4px 0 0 13px;
  white-space: nowrap;
}
.run-tab em { font-style: normal; color: #7d7d7d; font-size: 11px; margin-left: 5px; }
.run-actions { margin-left: auto; display: flex; align-items: center; gap: 14px; padding-right: 8px; }
.min-dash { display: block; width: 12px; height: 2px; background: #aaa; }

.run-body {
  flex: 1;
  position: relative;
  background: rgba(56, 56, 56, 0.45);
  display: flex;
}
.run-tools {
  width: 28px;
  border-right: 1px solid #444;
  display: flex;
  flex-direction: column;
  align-items: center;
  padding-top: 7px;
}
.stop-run { width: 10px; height: 10px; margin-top: 13px; }
.rt-scroll { margin-top: 22px; }
.rt-trash { margin-top: 12px; }
.rt-layout { margin-top: 22px; }
.rt-more { margin-top: 21px; color: #888; font-size: 14px; line-height: 1; }
.console {
  padding: 6px 0 0 5px;
  font: 11.500px/15px "DejaVu Sans Mono", monospace;
  letter-spacing: 0;
  color: #bbb;
  white-space: nowrap;
}
.cursor { display: block; width: 8px; height: 21px; border: 1px solid #bbb; margin-top: -1px; }
.balloon {
  position: absolute;
  left: 624px;
  top: 151px;
  width: 169px;
  height: 30px;
  background: #10374f;
  border: 1px solid #1d5a73;
  border-radius: 3px;
  color: #5fb4dc;
  line-height: 28px;
  padding-left: 11px;
  white-space: nowrap;
}
.balloon::after {
  content: '';
  position: absolute;
  left: 78px;
  bottom: -6px;
  border: 6px solid transparent;
  border-top-color: #10374f;
  border-bottom: 0;
}

.side-right {
  width: 20px;
  background: #353535;
  display: flex;
  flex-direction: column;
  align-items: center;
}
.sr-flask { margin-top: 13px; }
.sr-errors { margin-top: 5px; }
.sr-db { margin-top: 36px; }
.sr-database { margin-top: 0; }
.sr-shield { margin-top: 22px; }
.sr-unit { margin-top: 6px; }
.sr-toolbox { margin-top: 162px; }
.sr-toolbox-label { margin-top: 4px; }

.toolstrip {
  height: 21px;
  background: rgba(58, 58, 58, 0.8);
  display: flex;
  align-items: center;
  padding-left: 33px;
  gap: 23px;
}
.strip-item { display: flex; align-items: center; gap: 5px; position: relative; }
.strip-run::before {
  content: '';
  position: absolute;
  left: -11px;
  right: -9px;
  top: -4px;
  bottom: -3px;
  background: rgba(40, 40, 40, 0.55);
  z-index: -1;
}
.strip-log { margin-left: auto; margin-right: 31px; }

.statusbar {
  height: 20px;
  background: rgba(62, 62, 62, 0.9);
  display: flex;
  align-items: center;
  padding-left: 6px;
}
.status-msg { margin-left: 9px; }
.status-right { margin-left: auto; display: flex; align-items: center; gap: 12px; padding-right: 9px; }
.dim { color: #6e6e6e; margin-right: 4px; }
.pos { background: #444; padding: 0 7px 0 6px; height: 20px; line-height: 20px; margin-right: -6px; }
.st-hat { margin-left: -4px; }

/*---------------------------------- TASKBAR ----------------------------------*/
.taskbar {
  position: relative;
  height: 40px;
  background: #08120f;
  display: flex;
  align-items: center;
  color: #fff;
}
.taskbar > svg, .tk-chrome { position: absolute; top: 50%; transform: translateY(-50%); }
.tk-win { left: 16px; }
.tk-search { left: 64px; }
.tk-drop { left: 111px; }
.tk-edge { left: 162px; }
.tk-files { left: 210px; }
.tk-chrome {
  left: 258px;
  width: 23px;
  height: 23px;
  border-radius: 50%;
  background: conic-gradient(#e8453c 0 120deg, #f7c52b 120deg 240deg, #3aa757 240deg);
  display: flex;
  align-items: center;
  justify-content: center;
}
.tk-chrome i { display: block; width: 11px; height: 11px; border-radius: 50%; background: #4a8af4; border: 2px solid #fff; }
.tk-ij { left: 307px; }
.tk-word { left: 356px; }
.tk-kraken { left: 403px; }
.tk-rd { left: 453px; }
.ij-text, .rd-text { font: bold 8px "Liberation Sans", sans-serif; fill: #fff; }
.word-text { font: bold 11px "Liberation Sans", sans-serif; fill: #fff; }
.help-text { font: bold 15px "Liberation Sans", sans-serif; fill: #fff; }
.tk-active {
  position: absolute;
  left: 491px;
  top: 0;
  width: 47px;
  height: 40px;
  background: #3a3f3f;
  display: flex;
  align-items: center;
  justify-content: center;
  border-bottom: 2px solid #76dede;
}
.taskbar::after {
  content: '';
  position: absolute;
  left: 250px;
  bottom: 0;
  width: 40px;
  height: 2px;
  background: #76dede;
  box-shadow: 98px 0 0 #76dede, 196px 0 0 #76dede;
}
.tray { margin-left: auto; display: flex; align-items: center; padding-right: 19px; font-size: 12px; }
.tr-people { margin-left: 24px; }
.tr-up { margin-left: 22px; }
.tr-batt { margin-left: 10px; }
.tr-cloud { margin-left: 9px; }
.tr-wifi { margin-left: 8px; }
.tr-vol { margin-left: 11px; }
.tr-lang { margin-left: 11px; }
.tr-clock { margin-left: 11px; display: flex; flex-direction: column; align-items: center; gap: 4px; line-height: 12px; }
.tr-notif { position: relative; margin-left: 17px; display: block; width: 20px; height: 24px; }
.tr-notif b {
  position: absolute;
  right: -4px;
  bottom: -2px;
  width: 15px;
  height: 15px;
  border-radius: 50%;
  background: #333;
  border: 1px solid #999;
  font-size: 10px;
  line-height: 13px;
  text-align: center;
}

/*---------------------------------- WINFORMS WINDOWS ----------------------------------*/
.window { position: absolute; display: flex; flex-direction: column; background: #4b0078; }
.win-login { left: 34px; top: 27px; width: 656px; height: 420px; box-shadow: 0 0 0 1px #5b3a80; }
.win-customer {
  left: 505px;
  top: 128px;
  width: 632px;
  height: 429px;
  border: 1px solid #22b8c8;
  box-shadow: 0 0 14px rgba(0, 0, 0, 0.45);
}
.titlebar {
  height: 30px;
  background: #fff;
  display: flex;
  align-items: center;
  padding-left: 9px;
  color: #222;
  font-size: 12.500px;
  letter-spacing: -0.2px;
  flex: none;
}
.title-text { margin: 0 0 2px 6px; }
.title-dim .title-text { color: #8c8c8c; }
.title-btns { margin-left: auto; display: flex; gap: 34px; padding-right: 17px; }

.hand-label {
  font: italic 500 24px/20px Lato, "Open Sans", sans-serif;
  letter-spacing: 2px;
  color: #fff;
  white-space: nowrap;
  margin-top: -1px;
}
.win-input {
  height: 20px;
  border: 1px solid #767676;
  border-top-color: #6c6c6c;
  background: #fff;
  padding: 0 2px;
  font: 12px "Liberation Sans", sans-serif;
  color: #000;
  outline: 0;
  border-radius: 0;
}

.login-body { flex: 1; display: flex; min-height: 0; }
.login-left { width: 201px; padding: 86px 0 0 10px; flex: none; }
.logo-box {
  width: 177px;
  height: 128px;
  background: #3a2558;
  display: flex;
  flex-direction: column;
  align-items: center;
  padding-top: 23px;
  color: #fff;
}
.hugo { font: 900 29px/26px Inter, Lato, sans-serif; margin-top: 13px; letter-spacing: 0.800px; }
.hugo-tag { font: 5.500px/8px "Open Sans", sans-serif; color: #cfc6dc; margin-top: 1px; }
.btn-plain {
  display: block;
  width: 168px;
  height: 29px;
  margin: 135px 0 0 1px;
  background: #d8bfd8;
  border: 2px solid #dedede;
  font: italic 17px/24px Lato, sans-serif;
  letter-spacing: 0.500px;
  color: #111;
  padding: 3px 0 0;
}
.login-form { padding-top: 96px; flex: none; width: 340px; }
.login-row { display: grid; grid-template-columns: 179px 130px; align-items: center; }
.row-pass { margin-top: 100px; }
.label-pass { margin-left: 22px; }
.btn-login {
  display: block;
  width: 150px;
  height: 41px;
  margin: 68px 0 0 145px;
  background: #d8bfd8;
  border: 2px solid #0078d7;
  box-shadow: inset 0 0 0 1px #dedede;
  font: italic 23px/30px Lato, sans-serif;
  letter-spacing: 1px;
  color: #111;
  padding: 0 5px 0 0;
}

.customer-body { flex: 1; padding: 10px 11px 10px 10px; display: flex; flex-direction: column; min-height: 0; }
.tabs { height: 21px; display: flex; align-items: flex-end; padding-left: 2px; flex: none; }
.tab {
  height: 19px;
  background: #f0f0f0;
  border: 1px solid #d9d9d9;
  border-bottom: 0;
  font: 11.500px/19px "Liberation Sans", sans-serif;
  letter-spacing: -0.500px;
  color: #111;
  text-align: center;
  white-space: nowrap;
}
.tab.active { height: 21px; background: #fff; line-height: 18px; }
.tab-add { width: 70px; }
.tab-create { width: 69px; }
.tab-orders { width: 80px; }
.tab-addr { width: 81px; }
.tab-hist { width: 67px; }
.tab-del { width: 42px; }
.tab-mod { width: 82px; }
.tab-page {
  flex: 1;
  border: 3px solid #fff;
  outline: 1px solid #c8c8c8;
  outline-offset: -1px;
  padding: 31px 37px 0 38px;
  min-height: 0;
}
.search-row { display: flex; align-items: center; height: 32px; }
.label-id { width: 176px; padding-left: 37px; font-size: 19px; }
.input-id { width: 138px; }
.btn-view {
  width: 121px;
  height: 32px;
  margin-left: 70px;
  background: #d8bfd8;
  border: 2px solid #0078d7;
  box-shadow: inset 0 0 0 1px #dedede;
  font: italic 19px/26px Lato, sans-serif;
  color: #111;
  padding: 0;
}
.datagrid {
  margin-top: 24px;
  margin-left: 1px;
  width: 530px;
  height: 219px;
  border: 1px solid #000;
  border-top-width: 2px;
  display: flex;
  flex-direction: column;
  background: #ababab;
  overflow: hidden;
}
.datagrid table {
  border-collapse: collapse;
  table-layout: fixed;
  width: 540px;
  flex: none;
  font: 11.500px "Liberation Sans", sans-serif;
  letter-spacing: -0.500px;
  color: #111;
  background: #fff;
}
.datagrid th, .datagrid td {
  width: 100px;
  height: 22px;
  padding: 0 3px;
  border: 1px solid #a0a0a0;
  border-top: 0;
  border-left: 0;
  text-align: left;
  font-weight: normal;
  white-space: nowrap;
  overflow: hidden;
}
.datagrid th { height: 19px; padding-left: 7px; border-right-color: #e4e4e4; }
.datagrid .row-head { width: 40px; border-right: 1px solid #a0a0a0; border-bottom: 1px solid #e4e4e4; }
.datagrid td.selected { background: #0078d7; color: #fff; }
.row-arrow {
  display: block;
  width: 0;
  height: 0;
  margin-left: 4px;
  border: 5px solid transparent;
  border-left: 5px solid #333;
  border-right: 0;
}
.row-star { display: block; width: 5px; height: 5px; margin-left: 6px; border-radius: 50%; background: #555; }
.grid-empty { flex: 1; }
.hscroll {
  height: 17px;
  flex: none;
  background: #f0f0f0;
  border-top: 1px solid #fff;
  display: flex;
  align-items: center;
}
.hscroll-thumb { display: block; width: 480px; height: 16px; background: #cdcdcd; }
.hscroll-right { margin-left: 14px; }
```
